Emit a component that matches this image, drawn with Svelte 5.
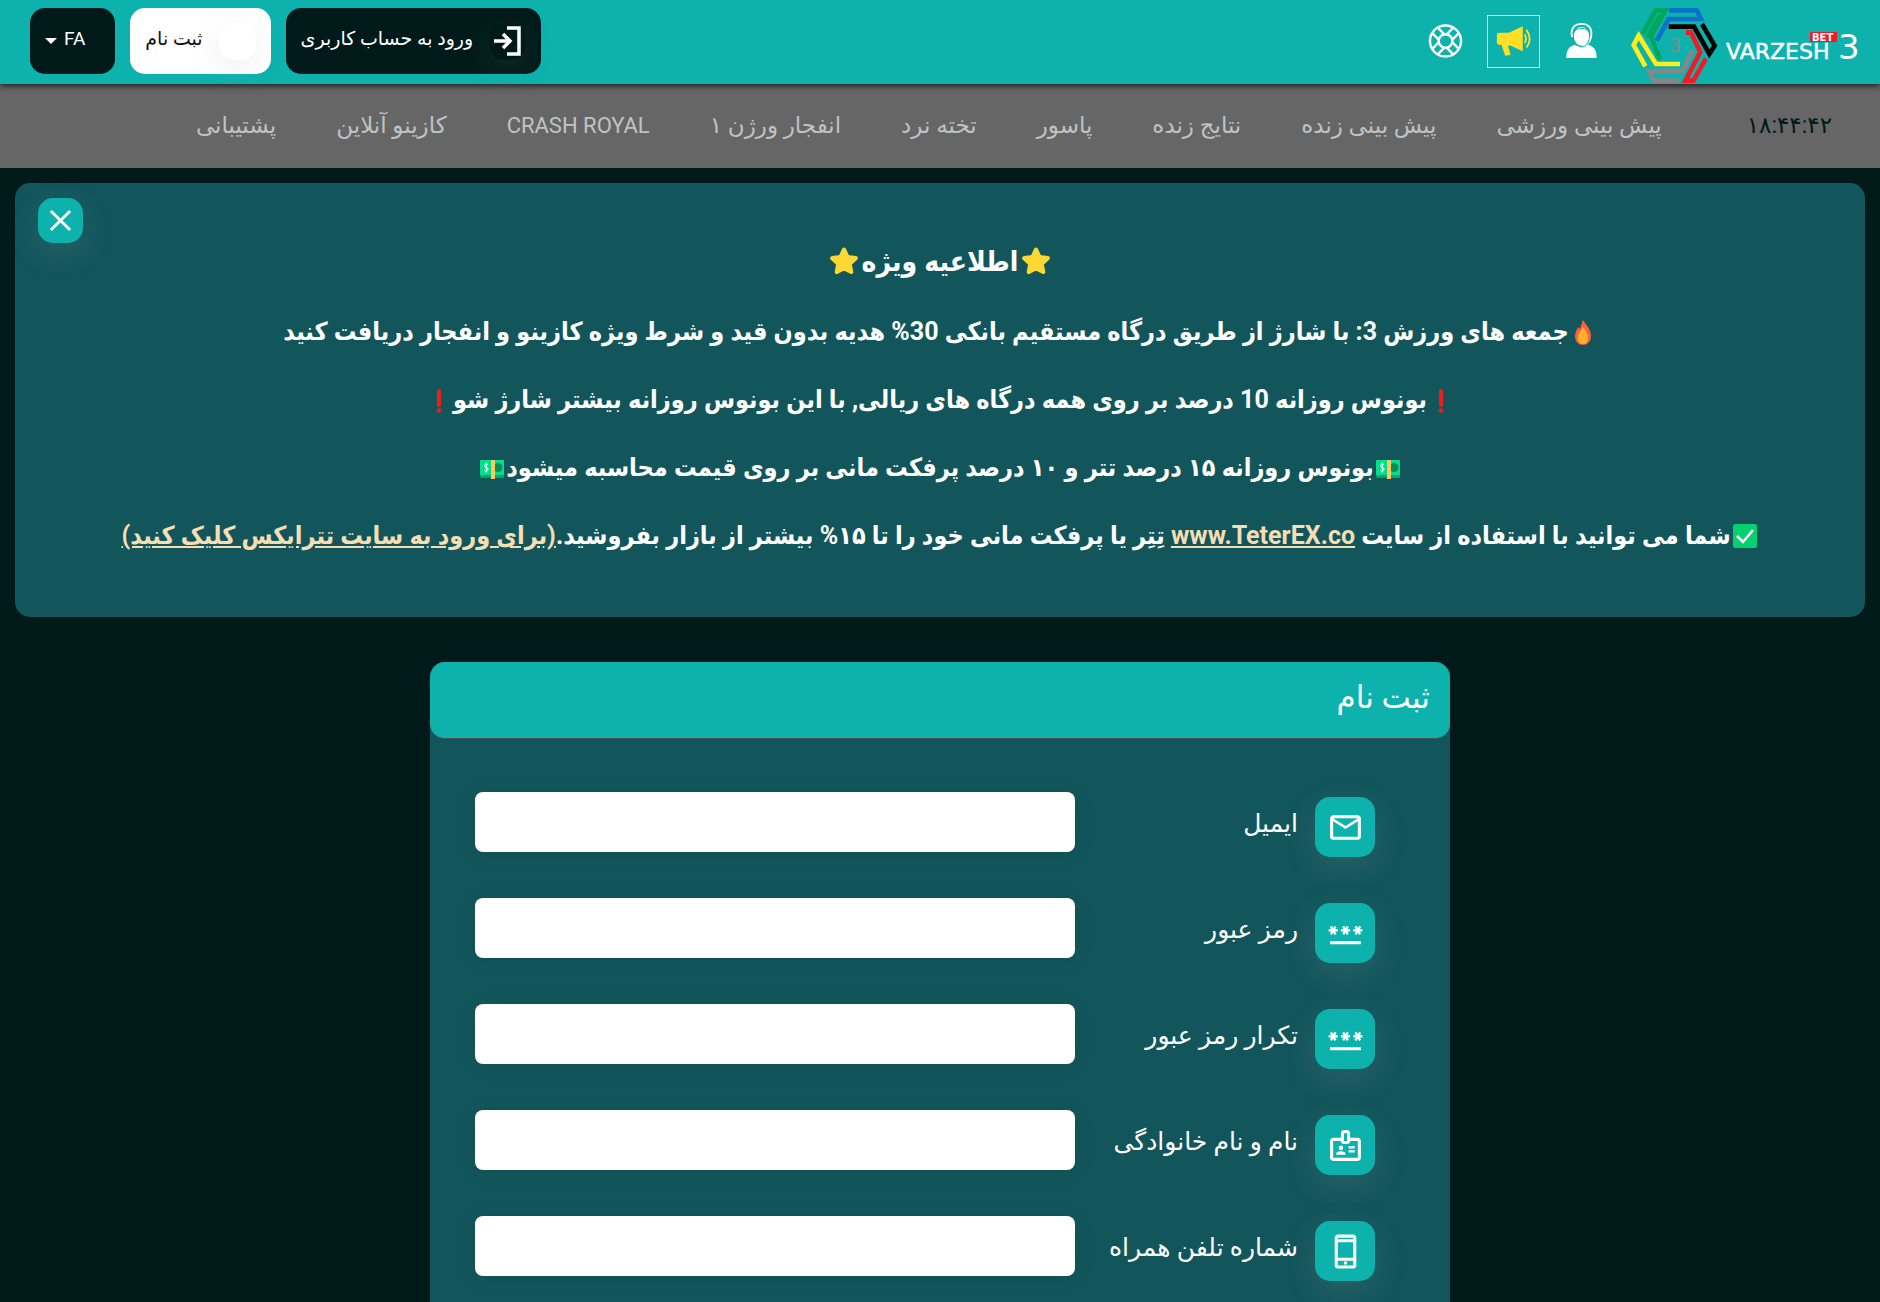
<script lang="ts">
  const menu = [
    'پیش بینی ورزشی',
    'پیش بینی زنده',
    'نتایج زنده',
    'پاسور',
    'تخته نرد',
    'انفجار ورژن ۱',
    'CRASH ROYAL',
    'کازینو آنلاین',
    'پشتیبانی'
  ];

  const fields = [
    { id: 'email', label: 'ایمیل', type: 'email', icon: 'mail' },
    { id: 'password', label: 'رمز عبور', type: 'password', icon: 'password' },
    { id: 'password-repeat', label: 'تکرار رمز عبور', type: 'password', icon: 'password' },
    { id: 'full-name', label: 'نام و نام خانوادگی', type: 'text', icon: 'badge' },
    { id: 'mobile', label: 'شماره تلفن همراه', type: 'tel', icon: 'phone' }
  ];

  const icons: Record<string, string> = {
    mail: 'M22 6c0-1.100-.9-2-2-2H4c-1.100 0-2 .9-2 2v12c0 1.100.9 2 2 2h16c1.100 0 2-.9 2-2V6zm-2 0-8 5-8-5h16zm0 12H4V8l8 5 8-5v10z',
    password:
      'M2 17h20v2H2v-2zm1.150-4.050L4 11.470l.85 1.480 1.300-.75-.85-1.480H7v-1.500H5.300l.85-1.470L4.850 7 4 8.470 3.150 7l-1.300.75.85 1.470H1v1.500h1.700l-.85 1.480 1.300.75zm6.700-.75 1.300.75.85-1.480.85 1.480 1.300-.75-.85-1.480H15v-1.500h-1.700l.85-1.470-1.300-.75L12 8.470 11.150 7l-1.300.75.85 1.470H9v1.500h1.700l-.85 1.480zM23 9.220h-1.700l.85-1.470-1.300-.75L20 8.470 19.150 7l-1.300.75.85 1.470H17v1.500h1.700l-.85 1.480 1.300.75.85-1.480.85 1.480 1.300-.75-.85-1.480H23v-1.500z',
    badge:
      'M14 12.500h4V14h-4zM14 15h4v1.500h-4zM20 7h-5V4c0-1.100-.9-2-2-2h-2c-1.100 0-2 .9-2 2v3H4c-1.100 0-2 .9-2 2v11c0 1.100.9 2 2 2h16c1.100 0 2-.9 2-2V9c0-1.100-.9-2-2-2zm-9-3h2v5h-2V4zm9 16H4V9h5c0 1.100.9 2 2 2h2c1.100 0 2-.9 2-2h5v11zM9 15a1.500 1.500 0 1 0 0-3 1.500 1.500 0 0 0 0 3zm2.080 1.180C10.440 15.900 9.740 15.750 9 15.750s-1.440.15-2.080.43c-.56.24-.92.780-.92 1.390V18h6v-.43c0-.61-.36-1.150-.92-1.390z',
    phone:
      'M17 1H7c-1.100 0-2 .9-2 2v18c0 1.100.9 2 2 2h10c1.100 0 2-.9 2-2V3c0-1.100-.9-2-2-2zM7 3h10v1H7V3zm0 3h10v10H7V6zm0 15v-3h10v3H7zm5-2.600a1.100 1.100 0 1 0 0 2.200 1.100 1.100 0 0 0 0-2.200z'
  };

  let noticeOpen = $state(true);
</script>

{#snippet star()}
  <svg class="emoji" viewBox="0 0 28 28" aria-hidden="true"><path d="M14 2.500l3.200 7 7.700.9-5.700 5.300 1.500 7.600-6.700-3.700-6.700 3.700 1.500-7.600-5.700-5.300 7.700-.9z" fill="#fdd835" stroke="#fdd835" stroke-width="4" stroke-linejoin="round" /></svg>
{/snippet}

{#snippet bang()}
  <svg class="emoji" viewBox="0 0 28 28" aria-hidden="true"><rect x="12" y="3" width="4" height="18" rx="2" fill="#f11d1d" /><circle cx="14" cy="24.500" r="2.200" fill="#f11d1d" /></svg>
{/snippet}

{#snippet cash()}
  <svg class="emoji" viewBox="0 0 28 28" aria-hidden="true">
    <rect x="2" y="6" width="24" height="18" rx="1" fill="#00a86b" />
    <rect x="2" y="6" width="24" height="15" rx="1" fill="#00e08a" />
    <circle cx="20" cy="13.500" r="4.500" fill="#0b8a5a" />
    <rect x="13" y="6" width="4" height="19" fill="#fdc962" />
    <path d="M10 10.500Q8 9 6.800 10.800T8.500 13.500T9.500 16.500T6.500 16.500M8.300 8.800V18.500" fill="none" stroke="#fff" stroke-width="1" />
  </svg>
{/snippet}

<div class="page" dir="rtl">
  <header class="topbar">
    <div class="brand-side">
      <a class="brand" href="/" aria-label="VARZESH3 BET">
        <svg class="wordmark" viewBox="0 0 134 50">
          <text x="0" y="39" font-size="22">VARZESH</text>
          <text class="digit" x="112" y="39" font-size="34">3</text>
          <rect x="84" y="12" width="27" height="10" fill="#ee1c25" />
          <text class="tag" x="86" y="21" font-size="10">BET</text>
        </svg>
        <svg class="emblem" viewBox="30 18 264 234" fill="none" stroke-width="14">
          <path d="M68 102L107 32H136L96 104L94 112L120 178M82 112L120 46" stroke="#00a65a" />
          <path d="M148 31H230L243 57H146L110 122" stroke="#0a72c8" />
          <path d="M146 80H222L268 162L284 137L246 72" stroke="#000" />
          <path d="M198 98H213L241 156L196 242H220L258 176" stroke="#ee1c25" />
          <path d="M217 150L188 213H86L102 242H176" stroke="#85888a" />
          <path d="M180 192H108L56 107L41 135L76 199" stroke="#ffee1f" />
          <text class="core" x="148" y="155" font-size="56">3</text>
        </svg>
      </a>
      <a class="icon-link" href="#account" aria-label="پشتیبان">
        <svg viewBox="0 0 36 40" fill="#fff">
          <path d="M2 38c0-9 3-12 9-14l7 3 7-3c6 2 9 5 9 14z" />
          <ellipse cx="18" cy="15" rx="8" ry="10" />
          <path d="M8 16C6 5 12 2 18 2s12 3 10 14c-1 6-4 9-10 10" fill="none" stroke="#fff" stroke-width="2" />
          <path d="M9 12C11 5 25 5 27 12M26 19c-1 5-4 7-8 7" fill="none" stroke="#0db2ad" stroke-width="1" />
        </svg>
      </a>
      <a class="icon-link boxed" href="#news" aria-label="اخبار">
        <svg viewBox="0 0 40 36" fill="#ffdf26">
          <path d="M4 9H15L30 2V29L17 23H14L17 33L11 34L7 22H4Q2 22 2 19V12Q2 9 4 9Z" />
          <path d="M32 11Q35 16 32 20M34 6Q41 16 34 25" fill="none" stroke="#ffdf26" stroke-width="2" />
        </svg>
      </a>
      <a class="icon-link" href="#help" aria-label="راهنما">
        <svg viewBox="0 0 36 36" fill="none" stroke="#fff">
          <circle cx="18" cy="18" r="16" stroke-width="2.500" />
          <circle cx="18" cy="18" r="7" stroke-width="2.500" />
          <path d="M14 3v9M22 3v9M14 24v9M22 24v9M3 14h9M3 22h9M24 14h9M24 22h9" stroke-width="2.500" transform="rotate(45 18 18)" />
        </svg>
      </a>
    </div>
    <div class="account-side">
      <a class="pill dark" href="#login">
        <span class="pill-icon">
          <svg viewBox="0 0 30 30" fill="none" stroke="#fff" stroke-width="3.500"><path d="M14 2H26V28H14M1 15H16M10 8L17 15L10 22" /></svg>
        </span>
        <span class="pill-text">ورود به حساب کاربری</span>
      </a>
      <a class="pill light" href="#register"><span class="pill-icon"></span><span class="pill-text">ثبت نام</span></a>
      <button class="pill dark lang" type="button"><span class="pill-text">FA</span> <span class="caret"></span></button>
    </div>
  </header>

  <nav class="menu">
    <time class="clock">۱۸:۴۴:۴۲</time>
    {#each menu as item}
      <a href="#menu" class:latin={item === 'CRASH ROYAL'}>{item}</a>
    {/each}
  </nav>

  <main>
    {#if noticeOpen}
      <section class="notice">
        <button class="close" type="button" aria-label="بستن" onclick={() => (noticeOpen = false)}>
          <svg viewBox="0 0 24 24" fill="none" stroke="#fff" stroke-width="3"><path d="M2 2L22 22M22 2L2 22" /></svg>
        </button>
        <h2>{@render star()}اطلاعیه ویژه{@render star()}</h2>
        <p>
          <svg class="emoji" viewBox="0 0 28 28" aria-hidden="true"><path d="M14 2C17 7 22 11 22 18C22 24 18 27 14 27S6 24 6 18C6 14 8 12 9 9L11 11C12 8 13 5 14 2Z" fill="#ff6036" /><path d="M14 9C17 13 19 15 19 20C19 24 17 26 14 26S9 24 9 20C9 15 12 13 14 9Z" fill="#ffb02e" /></svg>جمعه های ورزش 3: با شارژ از طریق درگاه مستقیم بانکی 30% هدیه بدون قید و شرط ویژه کازینو و انفجار دریافت کنید
        </p>
        <p>{@render bang()}بونوس روزانه 10 درصد بر روی همه درگاه های ریالی, با این بونوس روزانه بیشتر شارژ شو{@render bang()}</p>
        <p>{@render cash()}بونوس روزانه ۱۵ درصد تتر و ۱۰ درصد پرفکت مانی بر روی قیمت محاسبه میشود{@render cash()}</p>
        <p>
          <svg class="emoji" viewBox="0 0 28 28" aria-hidden="true"><rect x="2" y="2" width="24" height="24" rx="2" fill="#05d070" /><path d="M6 14L12 20L22 8" fill="none" stroke="#fff" stroke-width="2.500" /></svg>شما می توانید با استفاده از سایت <a href="#teterex">www.TeterEX.co</a> تِتِر یا پرفکت مانی خود را تا ۱۵% بیشتر از بازار بفروشید.<a href="#teterex">(برای ورود به سایت تترایکس کلیک کنید)</a>
        </p>
      </section>
    {/if}

    <form class="card">
      <h1>ثبت نام</h1>
      <div class="fields">
        {#each fields as field}
          <div class="field">
            <span class="badge"><svg viewBox="0 0 24 24" fill="#fff"><path d={icons[field.icon]} /></svg></span>
            <label for={field.id}>{field.label}</label>
            <input id={field.id} type={field.type} />
          </div>
        {/each}
      </div>
    </form>
  </main>
</div>

<style>
  :global(body) {
    margin: 0;
    background: #001a1a;
    overflow: hidden;
  }
  .page {
    font-family: Roboto, 'DejaVu Sans', sans-serif;
    color: #fff;
  }
  .page * {
    box-sizing: border-box;
  }
  a {
    color: inherit;
    text-decoration: none;
  }
  .topbar {
    position: relative;
    display: flex;
    justify-content: space-between;
    height: 84px;
    padding: 8px 20px 0 30px;
    background: #0db2ad;
    box-shadow: 0 2px 6px rgba(0, 0, 0, 0.7);
  }
  .brand-side,
  .account-side,
  .brand {
    display: flex;
  }
  .brand-side {
    align-items: center;
    height: 66px;
    gap: 24px;
  }
  .brand {
    align-items: center;
    gap: 8px;
    height: 74px;
    margin: 8px 0 0 7px;
  }
  .wordmark {
    width: 134px;
    height: 50px;
    direction: ltr;
    font-family: 'DejaVu Sans', sans-serif;
    fill: #fff;
    stroke: #fff;
    stroke-width: 0.5px;
  }
  .wordmark .digit,
  .wordmark .tag,
  .wordmark rect {
    stroke: none;
  }
  .wordmark .tag {
    font-weight: 700;
  }
  .emblem {
    width: 88px;
    height: 78px;
    direction: ltr;
  }
  .core {
    font-family: 'DejaVu Sans', sans-serif;
    fill: #85888a;
    stroke: none;
  }
  .icon-link {
    display: flex;
    align-items: center;
    justify-content: center;
    width: 35px;
    height: 53px;
  }
  .icon-link svg {
    width: 100%;
    height: 38px;
  }
  .icon-link.boxed {
    width: 53px;
    padding: 0 7px;
    border: 1px solid #fff;
  }
  .account-side {
    gap: 15px;
  }
  .pill {
    display: flex;
    align-items: center;
    gap: 16px;
    height: 66px;
    padding: 0 15px;
    border: 0;
    border-radius: 15px;
    font-family: inherit;
    font-size: 19px;
  }
  .pill-text {
    padding-bottom: 5px;
  }
  .dark {
    background: #001a1a;
    color: #fff;
  }
  .light {
    background: #fff;
    color: #111;
  }
  .pill-icon {
    display: flex;
    align-items: center;
    justify-content: center;
    width: 37px;
    height: 37px;
    border-radius: 15px;
    box-shadow: 0 10px 30px rgba(140, 150, 150, 0.15);
  }
  .pill-icon svg {
    width: 30px;
    height: 30px;
  }
  .lang {
    gap: 7px;
    padding: 0 30px 0 15px;
  }
  .caret {
    border: 6px solid transparent;
    border-top-color: #fff;
    border-bottom: 0;
  }
  .menu {
    display: flex;
    align-items: center;
    gap: 60px;
    height: 84px;
    padding: 0 48px 2px;
    background: #666;
    color: #bfc3c1;
    font-size: 23px;
    white-space: nowrap;
  }
  .latin {
    font-size: 22px;
  }
  .clock {
    margin-left: 25px;
    color: #001a1a;
  }
  main {
    padding: 15px;
  }
  .notice {
    position: relative;
    padding: 45px 20px 47px;
    border-radius: 15px;
    background: #12565c;
    font-family: Roboto, 'DejaVu Sans Condensed', 'DejaVu Sans', sans-serif;
    text-align: center;
    font-weight: 700;
  }
  .close {
    position: absolute;
    top: 15px;
    left: 23px;
    display: flex;
    align-items: center;
    justify-content: center;
    width: 45px;
    height: 45px;
    padding: 0;
    border: 0;
    border-radius: 15px;
    background: #0db2ad;
    box-shadow: 0 10px 30px rgba(140, 150, 150, 0.2);
  }
  .close svg {
    width: 23px;
    height: 23px;
  }
  h2,
  p {
    margin: 0;
    line-height: 68px;
    white-space: nowrap;
  }
  h2 {
    padding-bottom: 2px;
    font-size: 28px;
  }
  p {
    font-size: 25px;
  }
  .emoji {
    width: 28px;
    height: 28px;
    vertical-align: -6px;
  }
  h2 .emoji {
    width: 30px;
    height: 30px;
    margin: 0 3px;
  }
  p a {
    color: #f5deb3;
    text-decoration: underline;
  }
  .card {
    width: 1020px;
    max-width: 100%;
    margin: 45px auto 0;
    border-radius: 15px;
    background: #12565c;
  }
  h1 {
    margin: 0;
    height: 77px;
    padding: 0 20px;
    border-bottom: 1px solid #4d5052;
    border-radius: 15px;
    background: #0db2ad;
    font-size: 31px;
    font-weight: 400;
    line-height: 72px;
  }
  .fields {
    display: grid;
    gap: 41px;
    padding: 53px 75px 50px 45px;
  }
  .field {
    display: grid;
    grid-template-columns: 60px 1fr 600px;
    align-items: start;
  }
  .badge {
    display: flex;
    align-items: center;
    justify-content: center;
    width: 60px;
    height: 60px;
    margin-top: 5px;
    border-radius: 15px;
    background: #0db2ad;
    box-shadow: 0 10px 30px rgba(140, 150, 150, 0.2);
  }
  .badge svg {
    width: 37px;
    height: 37px;
  }
  label {
    padding-right: 17px;
    font-size: 25px;
    line-height: 64px;
    white-space: nowrap;
  }
  input {
    width: 100%;
    height: 60px;
    padding: 0 15px;
    border: 0;
    border-radius: 8px;
    background: #fff;
    font-size: 20px;
    box-shadow: 0 2px 20px rgba(0, 0, 0, 0.08);
  }
</style>
